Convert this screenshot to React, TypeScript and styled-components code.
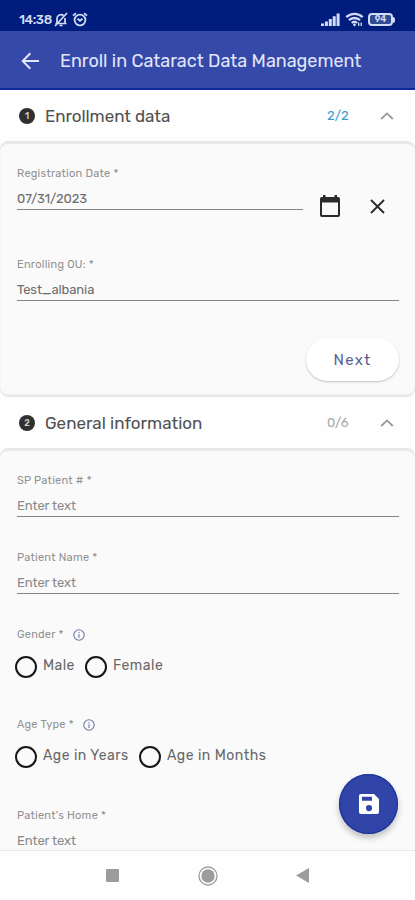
import React from "react";
import styled, { createGlobalStyle } from "styled-components";

const GlobalStyle = createGlobalStyle`
  * { box-sizing: border-box; }
  body { margin: 0; background: #fff; font-family: Rubik, Roboto, "Liberation Sans", sans-serif; }
`;

const Screen = styled.div`
  position: relative;
  display: flex;
  flex-direction: column;
  width: 415px;
  height: 900px;
  overflow: hidden;
  background: #fefefe;
`;

const StatusBar = styled.div`
  display: flex;
  flex: none;
  align-items: center;
  height: 31px;
  padding: 8px 20px 0 19px;
  background: #001d7e;
  color: #d3dcf5;
`;

const Clock = styled.span`
  width: 35px;
  font-size: 13px;
  font-weight: 500;
  letter-spacing: -0.4px;
  white-space: nowrap;
`;

const StatusGroup = styled.div<{ $end?: boolean }>`
  display: flex;
  align-items: center;
  gap: 4px;
  margin-left: ${(p) => (p.$end ? "auto" : "0")};
`;

const AppBar = styled.header`
  display: flex;
  flex: none;
  align-items: center;
  height: 59px;
  padding: 2px 0 0 21px;
  background: #3549a8;
  border-bottom: 2px solid #0c2b98;
  color: #e1e6fb;
`;

const Title = styled.h1`
  margin: 0 0 0 20px;
  font-size: 18px;
  font-weight: 400;
  letter-spacing: -0.02px;
  white-space: nowrap;
`;

const SectionHeader = styled.div<{ $height: number }>`
  display: flex;
  flex: none;
  align-items: center;
  height: ${(p) => p.$height}px;
  padding: 0 21px 0 19px;
`;

const StepBadge = styled.span`
  display: flex;
  align-items: center;
  justify-content: center;
  width: 16px;
  height: 16px;
  border-radius: 50%;
  background: #303030;
  color: #d0d0d0;
  font-size: 9px;
  font-weight: 500;
`;

const SectionTitle = styled.h2<{ $spacing: number }>`
  flex: 1;
  margin: 0 0 0 10px;
  color: #505050;
  font-size: 17px;
  font-weight: 400;
  letter-spacing: ${(p) => p.$spacing}px;
  white-space: nowrap;
`;

const Progress = styled.span<{ $complete?: boolean }>`
  width: 53px;
  color: ${(p) => (p.$complete ? "#3a9fcb" : "#a9a9a9")};
  font-size: 13px;
  letter-spacing: 0.1px;
`;

const Panel = styled.section<{ $height: number; $open?: boolean }>`
  display: flex;
  flex: none;
  flex-direction: column;
  height: ${(p) => p.$height}px;
  padding: ${(p) => (p.$open ? "2px 16px 0 17px" : "2px 16px 2px 17px")};
  border: solid #e5e5e5;
  border-width: ${(p) => (p.$open ? "1px 0 0" : "1px 0")};
  border-radius: ${(p) => (p.$open ? "8px 8px 0 0" : "8px")};
  background: #fafafa;
  box-shadow: ${(p) => (p.$open ? "inset 0 2px 1px #e8e8e8" : "inset 0 2px 1px #e8e8e8, inset 0 -2px 1px #ececec")};
`;

const Field = styled.div<{ $top: number; $width?: number }>`
  display: flex;
  flex: none;
  flex-direction: column;
  width: ${(p) => (p.$width ? `${p.$width}px` : "100%")};
  height: 44px;
  margin-top: ${(p) => p.$top}px;
  padding-top: 1px;
  border-bottom: 1px solid #858585;
`;

const Label = styled.span<{ $spacing?: number }>`
  color: #929292;
  font-size: 11px;
  line-height: 14px;
  letter-spacing: ${(p) => p.$spacing ?? 0.25}px;
  white-space: nowrap;
`;

const Value = styled.span<{ $muted?: boolean; $spacing?: number }>`
  margin-top: 10px;
  color: ${(p) => (p.$muted ? "#8a8a8a" : "#6c6c6c")};
  font-size: 13px;
  line-height: 16px;
  letter-spacing: ${(p) => p.$spacing ?? -0.1}px;
  white-space: nowrap;
`;

const DateRow = styled.div`
  display: flex;
  align-items: flex-start;
`;

const DateActions = styled.div`
  display: flex;
  align-items: center;
  gap: 30px;
  margin: 51px 0 0 17px;
  color: #2b2b2b;
`;

const NextButton = styled.button`
  align-self: flex-end;
  width: 93px;
  height: 43px;
  margin-top: 37px;
  padding: 0;
  border: 0;
  border-radius: 22px;
  background: #fff;
  box-shadow: 0 1px 2px rgba(0, 0, 0, 0.24);
  color: #5a5f96;
  font: 400 15px Rubik, Roboto, sans-serif;
  letter-spacing: 1.3px;
`;

const LabelRow = styled.div<{ $top: number }>`
  display: flex;
  align-items: center;
  gap: 9px;
  height: 14px;
  margin-top: ${(p) => p.$top}px;
`;

const Options = styled.div<{ $gap: number }>`
  display: flex;
  gap: ${(p) => p.$gap}px;
  height: 24px;
  margin: 12px 0 0 -2px;
`;

const Option = styled.label`
  display: flex;
  align-items: center;
  gap: 6px;
`;

const Radio = styled.span`
  width: 22px;
  height: 22px;
  margin-top: 2px;
  border: 2px solid #161616;
  border-radius: 50%;
`;

const OptionText = styled.span<{ $spacing: number; $width: number }>`
  width: ${(p) => p.$width}px;
  color: #686868;
  font-size: 14px;
  line-height: 20px;
  letter-spacing: ${(p) => p.$spacing}px;
  white-space: nowrap;
`;

const SaveButton = styled.button`
  position: absolute;
  right: 17px;
  bottom: 66px;
  display: flex;
  align-items: center;
  justify-content: center;
  width: 59px;
  height: 60px;
  padding: 0;
  border: 0;
  border-radius: 50%;
  background: #3045a7;
  box-shadow: 0 4px 6px rgba(0, 0, 0, 0.24), inset 0 0 1px 1px #1a309c;
`;

const NavBar = styled.nav`
  display: flex;
  flex: none;
  align-items: center;
  justify-content: space-between;
  height: 50px;
  padding: 0 106px;
  background: #fefefe;
  border-top: 1px solid #e8e8e8;
  color: #9c9c9c;
`;

const MutedBell = () => (
  <svg width="14" height="15" viewBox="0 0 14 15" fill="none" stroke="currentColor" strokeWidth="1.7">
    <path d="M3 11V6.5a4 4 0 0 1 6.5-3M11 6v5M1.5 11.5h11M5.5 13.5h3M1 14 13 1" />
  </svg>
);

const AlarmClock = () => (
  <svg width="16" height="15" viewBox="0 0 16 15" fill="none" stroke="currentColor" strokeWidth="1.8">
    <circle cx="8" cy="8" r="5.4" />
    <path d="m5.5 6.8 2.5 2 2.5-2M1 3.6l3-2.3M15 3.6l-3-2.3" />
  </svg>
);

const Signal = () => (
  <svg width="20" height="13" viewBox="0 0 20 13" fill="currentColor">
    <path d="M0 10.5h3V13H0zM3.9 8.5h3V13h-3zM7.8 6h3v7h-3zM11.7 3.3h3V13h-3zM15.6.5h3V13h-3z" />
  </svg>
);

const Wifi = () => (
  <svg width="19" height="15" viewBox="0 0 19 15" fill="none" stroke="currentColor" strokeWidth="2.3">
    <path d="M1.3 5.2a12 12 0 0 1 16.4 0M4 8.2a8 8 0 0 1 11 0M6.8 11a4 4 0 0 1 5.4 0" />
    <path d="m9.5 11.3 1.7 1.5-1.7 1.6-1.7-1.6z" fill="currentColor" stroke="none" />
    <path d="M13.7 10.5V14M16.2 10.5V14" strokeWidth="1.3" />
  </svg>
);

const BatteryShell = styled.span`
  display: flex;
  align-items: center;
  &::after {
    content: "";
    width: 2px;
    height: 6px;
    border-radius: 0 2px 2px 0;
    background: currentColor;
  }
`;

const BatteryLevel = styled.span`
  width: 25px;
  height: 13px;
  border: 2px solid currentColor;
  border-radius: 4px;
  background: #2f4b91;
  font-size: 9px;
  font-weight: 600;
  line-height: 9px;
  text-align: center;
`;

const BackArrow = () => (
  <svg width="19" height="18" viewBox="0 0 19 18" fill="none" stroke="currentColor" strokeWidth="2">
    <path d="M18 9H2M9.3 1.2 1.7 9l7.6 7.8" />
  </svg>
);

const Chevron = () => (
  <svg width="14" height="8" viewBox="0 0 14 8" fill="none" stroke="#999" strokeWidth="1.8">
    <path d="m1.2 7 5.8-5.6L12.8 7" />
  </svg>
);

const Calendar = () => (
  <svg width="20" height="22" viewBox="0 0 20 22" fill="currentColor">
    <path fillRule="evenodd" d="M3 0h2.5v2h9V0H17v2h1.2Q20 2 20 3.8v16.4q0 1.8-1.8 1.8H1.8Q0 22 0 20.2V3.8Q0 2 1.8 2H3zM2 7.5V20h16V7.5z" />
  </svg>
);

const Clear = () => (
  <svg width="15" height="15" viewBox="0 0 15 15" fill="none" stroke="currentColor" strokeWidth="1.9">
    <path d="m1 1 13 13M14 1 1 14" />
  </svg>
);

const Info = () => (
  <svg width="12" height="12" viewBox="0 0 12 12" fill="none" stroke="#747ba5" strokeWidth="1.1">
    <circle cx="6" cy="6" r="5.2" />
    <path d="M6 5.3v3.6M6 2.9v1.3" />
  </svg>
);

const Save = () => (
  <svg width="20" height="20" viewBox="0 0 20 20" fill="#fff">
    <path fillRule="evenodd" d="M2 0h13l5 5v13q0 2-2 2H2q-2 0-2-2V2q0-2 2-2zM3 2.8v4h10v-4zM10 11a3.1 3.1 0 1 0 0 6.2 3.1 3.1 0 0 0 0-6.2z" />
  </svg>
);

const choices = (items: { text: string; spacing: number; width: number }[]) =>
  items.map((item) => (
    <Option key={item.text}>
      <Radio />
      <OptionText $spacing={item.spacing} $width={item.width}>{item.text}</OptionText>
    </Option>
  ));

export default function App() {
  return (
    <>
      <GlobalStyle />
      <Screen>
        <StatusBar>
          <Clock>14:38</Clock>
          <StatusGroup><MutedBell /><AlarmClock /></StatusGroup>
          <StatusGroup $end>
            <Signal /><Wifi />
            <BatteryShell><BatteryLevel>94</BatteryLevel></BatteryShell>
          </StatusGroup>
        </StatusBar>
        <AppBar>
          <BackArrow />
          <Title>Enroll in Cataract Data Management</Title>
        </AppBar>

        <SectionHeader $height={51}>
          <StepBadge>1</StepBadge>
          <SectionTitle $spacing={-0.05}>Enrollment data</SectionTitle>
          <Progress $complete>2/2</Progress>
          <Chevron />
        </SectionHeader>
        <Panel $height={256}>
          <DateRow>
            <Field $top={22} $width={286}>
              <Label>Registration Date *</Label>
              <Value $spacing={-0.1}>07/31/2023</Value>
            </Field>
            <DateActions><Calendar /><Clear /></DateActions>
          </DateRow>
          <Field $top={40}>
            <Label>Enrolling OU: *</Label>
            <Value>Test_albania</Value>
          </Field>
          <NextButton>Next</NextButton>
        </Panel>

        <SectionHeader $height={51}>
          <StepBadge>2</StepBadge>
          <SectionTitle $spacing={0.02}>General information</SectionTitle>
          <Progress>0/6</Progress>
          <Chevron />
        </SectionHeader>
        <Panel $height={402} $open>
          <Field $top={22}>
            <Label>SP Patient # *</Label>
            <Value $muted>Enter text</Value>
          </Field>
          <Field $top={33}>
            <Label>Patient Name *</Label>
            <Value $muted>Enter text</Value>
          </Field>
          <LabelRow $top={34}><Label>Gender *</Label><Info /></LabelRow>
          <Options $gap={11}>
            {choices([{ text: "Male", spacing: 0.4, width: 31 }, { text: "Female", spacing: 0.5, width: 52 }])}
          </Options>
          <LabelRow $top={40}><Label>Age Type *</Label><Info /></LabelRow>
          <Options $gap={11}>
            {choices([{ text: "Age in Years", spacing: 0.5, width: 85 }, { text: "Age in Months", spacing: 0.5, width: 101 }])}
          </Options>
          <Field $top={40}>
            <Label>Patient's Home *</Label>
            <Value $muted>Enter text</Value>
          </Field>
        </Panel>
        <NavBar>
          <svg width="13" height="13"><rect width="13" height="13" rx="1" fill="currentColor" /></svg>
          <svg width="20" height="20" viewBox="0 0 20 20">
            <circle cx="10" cy="10" r="9" fill="none" stroke="currentColor" strokeWidth="1.3" />
            <circle cx="10" cy="10" r="6.7" fill="currentColor" />
          </svg>
          <svg width="13" height="15" viewBox="0 0 13 15"><path d="M0 7.5 13 0v15z" fill="currentColor" /></svg>
        </NavBar>
        <SaveButton aria-label="Save"><Save /></SaveButton>
      </Screen>
    </>
  );
}
